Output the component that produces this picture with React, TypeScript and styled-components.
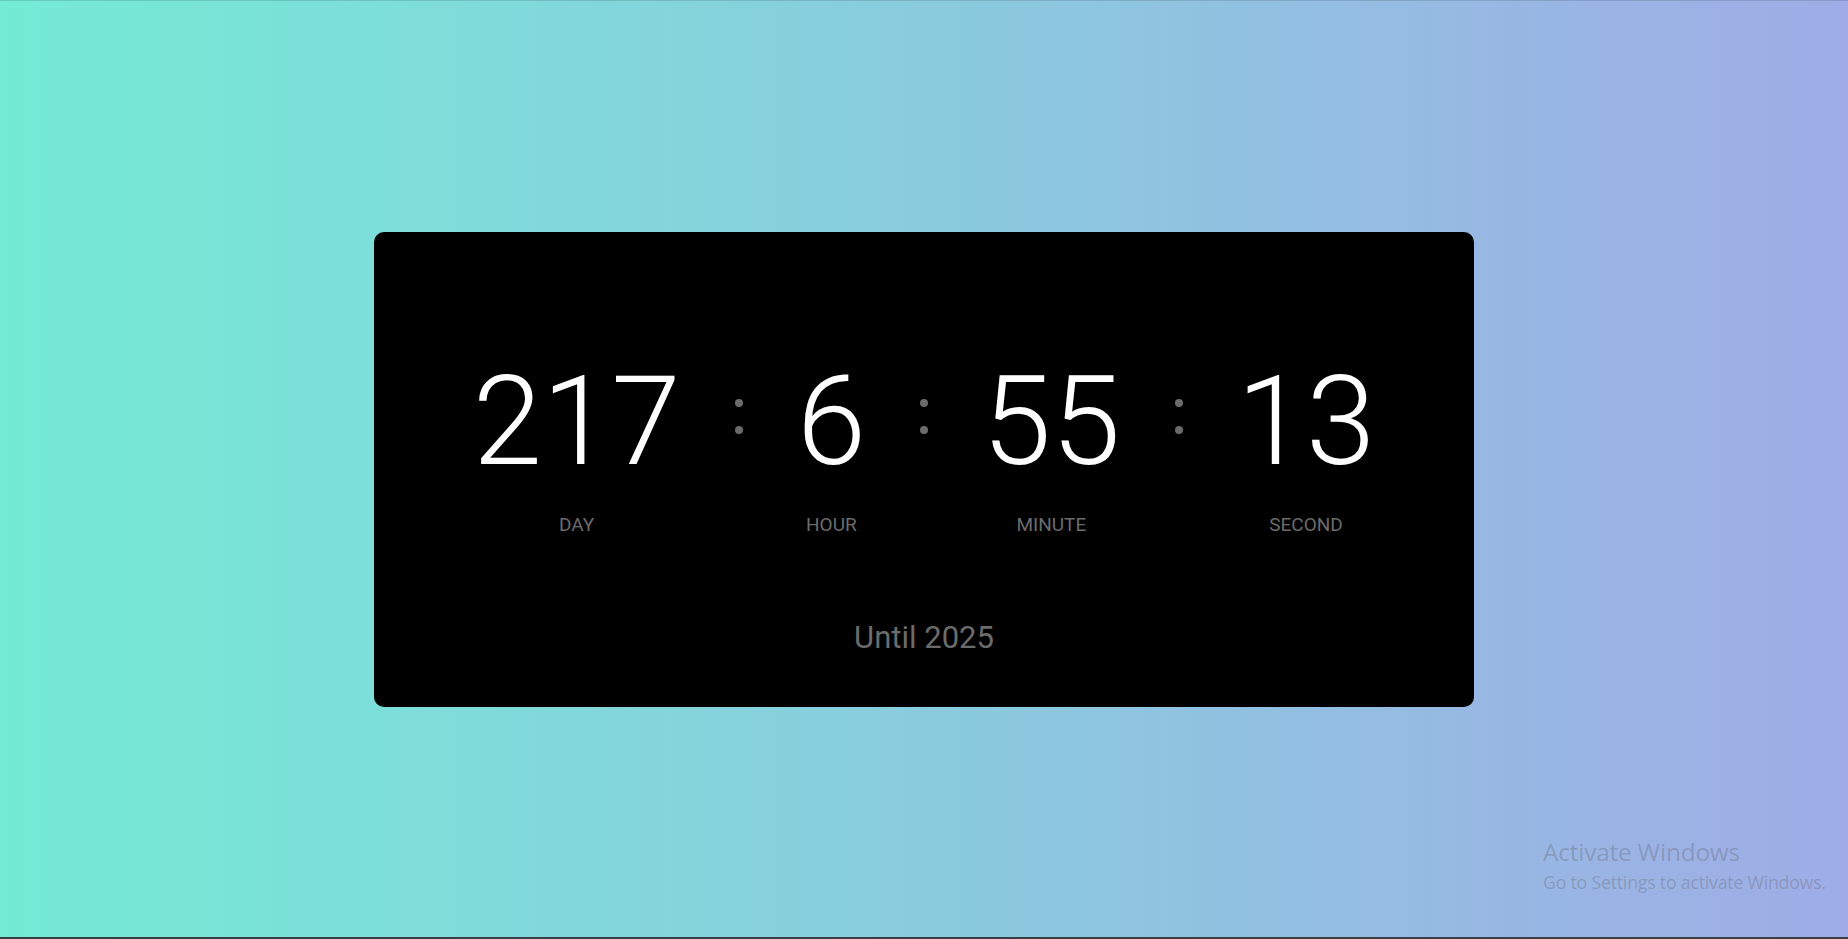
import React from "react";
import styled, { createGlobalStyle } from "styled-components";

const GlobalStyle = createGlobalStyle`
  *, *::before, *::after { box-sizing: border-box; }
  html, body { margin: 0; padding: 0; }
  body {
    font-family: Roboto, "Liberation Sans", Arial, sans-serif;
    overflow: hidden;
  }
`;

const Page = styled.main`
  position: relative;
  height: 939px;
  display: flex;
  align-items: center;
  justify-content: center;
  background: linear-gradient(to right, #74ebd5 0%, #9face6 100%);
  border-top: 1px solid rgba(0, 0, 0, 0.12);
  border-bottom: 2px solid #3b3f44;
`;

const Card = styled.section`
  width: 1100px;
  height: 475px;
  background: #000;
  border-radius: 10px;
  display: flex;
  flex-direction: column;
  align-items: center;
  padding-top: 127px;
`;

const Row = styled.div`
  display: flex;
  align-items: flex-start;
  justify-content: center;
  gap: 54px;
`;

const Unit = styled.div`
  display: flex;
  flex-direction: column;
  align-items: center;
`;

const Number = styled.span`
  font-family: Roboto, "Liberation Sans", sans-serif;
  font-weight: 300;
  font-size: 125px;
  line-height: 125px;
  color: #fff;
`;

const Label = styled.span`
  margin-top: 30px;
  font-family: Roboto, "Liberation Sans", sans-serif;
  font-weight: 400;
  font-size: 19px;
  line-height: 22px;
  color: #6b6b6b;
  text-transform: uppercase;
`;

const Colon = styled.div`
  height: 125px;
  display: flex;
  flex-direction: column;
  align-items: center;
  justify-content: center;
  gap: 19px;
  padding-bottom: 9px;
`;

const Dot = styled.span`
  width: 8px;
  height: 8px;
  border-radius: 50%;
  background: #6b6b6b;
`;

const Caption = styled.p`
  margin: 83px 0 0;
  font-family: Roboto, "Liberation Sans", sans-serif;
  font-weight: 400;
  font-size: 31px;
  line-height: 38px;
  color: #6b6b6b;
`;

const Watermark = styled.div`
  position: absolute;
  left: 1543px;
  top: 836px;
  font-family: "Open Sans", "Noto Sans", sans-serif;
  color: rgba(110, 115, 135, 0.42);
  pointer-events: none;
`;

const WatermarkTitle = styled.div`
  font-size: 24.4px;
  line-height: 30px;
  letter-spacing: -0.2px;
`;

const WatermarkText = styled.div`
  font-size: 17.7px;
  line-height: 24px;
  margin-top: 3px;
  letter-spacing: -0.2px;
`;

const units = [
  { value: "217", label: "Day" },
  { value: "6", label: "Hour" },
  { value: "55", label: "Minute" },
  { value: "13", label: "Second" },
];

export default function App() {
  return (
    <>
      <GlobalStyle />
      <Page>
        <Card>
          <Row>
            {units.map((u, i) => (
              <React.Fragment key={u.label}>
                {i > 0 && (
                  <Colon>
                    <Dot />
                    <Dot />
                  </Colon>
                )}
                <Unit>
                  <Number>{u.value}</Number>
                  <Label>{u.label}</Label>
                </Unit>
              </React.Fragment>
            ))}
          </Row>
          <Caption>Until 2025</Caption>
        </Card>
        <Watermark>
          <WatermarkTitle>Activate Windows</WatermarkTitle>
          <WatermarkText>Go to Settings to activate Windows.</WatermarkText>
        </Watermark>
      </Page>
    </>
  );
}
